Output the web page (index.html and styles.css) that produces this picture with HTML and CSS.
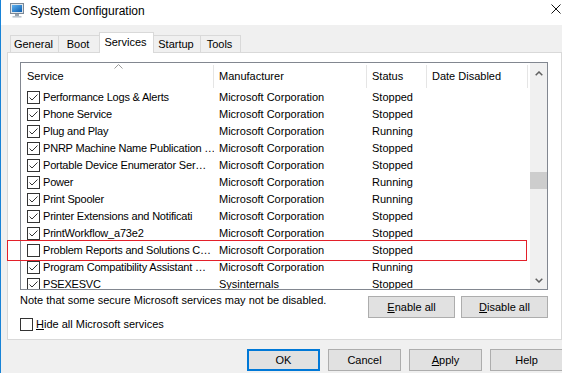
FILE: index.html
```html
<!DOCTYPE html>
<html lang="en">
<head>
<meta charset="utf-8">
<title>System Configuration</title>
<link rel="stylesheet" href="styles.css">
</head>
<body>
<div class="window">
  <div class="titlebar">
    <svg class="appicon" width="14" height="15" viewBox="0 0 14 15">
      <defs>
        <linearGradient id="scr" x1="0" y1="0" x2="1" y2="1">
          <stop offset="0" stop-color="#5fb2f0"/>
          <stop offset="1" stop-color="#0b5cae"/>
        </linearGradient>
      </defs>
      <rect x="0.5" y="0.5" width="13" height="10" fill="#dfe6ec" stroke="#7b8896"/>
      <rect x="2" y="2" width="10" height="7" fill="url(#scr)"/>
      <rect x="5" y="11" width="4" height="2" fill="#98a3ae"/>
      <rect x="2.5" y="13" width="9" height="1.6" fill="#b9c3cc"/>
    </svg>
    <span class="title">System Configuration</span>
    <svg class="close" width="10" height="10" viewBox="0 0 10 10">
      <path d="M0.5 0.5 L9.5 9.5 M9.5 0.5 L0.5 9.5" stroke="#111" stroke-width="1" fill="none"/>
    </svg>
  </div>
  <div class="client">
    <div class="tabs">
      <div class="tab t-general">General</div>
      <div class="tab t-boot">Boot</div>
      <div class="tab t-services active">Services</div>
      <div class="tab t-startup">Startup</div>
      <div class="tab t-tools">Tools</div>
    </div>
    <div class="panel">
      <div class="list">
        <div class="list-main">
          <div class="header cols">
            <div class="hcell c1">Service</div>
            <div class="hcell c2">Manufacturer</div>
            <div class="hcell c3">Status</div>
            <div class="hcell c4">Date Disabled</div>
            <svg class="sort" width="9" height="5" viewBox="0 0 9 5">
              <polyline points="0.5,4.5 4.5,0.5 8.5,4.5" fill="none" stroke="#9a9a9a" stroke-width="1"/>
            </svg>
          </div>
          <div class="rows">
            <div class="row cols"><div class="cell c1"><svg class="cb" viewBox="0 0 13 13"><rect x="0.5" y="0.5" width="12" height="12"/><polyline points="2.5,6.5 5,9 10.5,3.5"/></svg><span class="name">Performance Logs &amp; Alerts</span></div><div class="cell c2">Microsoft Corporation</div><div class="cell c3">Stopped</div><div class="cell c4"></div></div>
            <div class="row cols"><div class="cell c1"><svg class="cb" viewBox="0 0 13 13"><rect x="0.5" y="0.5" width="12" height="12"/><polyline points="2.5,6.5 5,9 10.5,3.5"/></svg><span class="name">Phone Service</span></div><div class="cell c2">Microsoft Corporation</div><div class="cell c3">Stopped</div><div class="cell c4"></div></div>
            <div class="row cols"><div class="cell c1"><svg class="cb" viewBox="0 0 13 13"><rect x="0.5" y="0.5" width="12" height="12"/><polyline points="2.5,6.5 5,9 10.5,3.5"/></svg><span class="name">Plug and Play</span></div><div class="cell c2">Microsoft Corporation</div><div class="cell c3">Running</div><div class="cell c4"></div></div>
            <div class="row cols"><div class="cell c1"><svg class="cb" viewBox="0 0 13 13"><rect x="0.5" y="0.5" width="12" height="12"/><polyline points="2.5,6.5 5,9 10.5,3.5"/></svg><span class="name">PNRP Machine Name Publication …</span></div><div class="cell c2">Microsoft Corporation</div><div class="cell c3">Stopped</div><div class="cell c4"></div></div>
            <div class="row cols"><div class="cell c1"><svg class="cb" viewBox="0 0 13 13"><rect x="0.5" y="0.5" width="12" height="12"/><polyline points="2.5,6.5 5,9 10.5,3.5"/></svg><span class="name">Portable Device Enumerator Ser…</span></div><div class="cell c2">Microsoft Corporation</div><div class="cell c3">Stopped</div><div class="cell c4"></div></div>
            <div class="row cols"><div class="cell c1"><svg class="cb" viewBox="0 0 13 13"><rect x="0.5" y="0.5" width="12" height="12"/><polyline points="2.5,6.5 5,9 10.5,3.5"/></svg><span class="name">Power</span></div><div class="cell c2">Microsoft Corporation</div><div class="cell c3">Running</div><div class="cell c4"></div></div>
            <div class="row cols"><div class="cell c1"><svg class="cb" viewBox="0 0 13 13"><rect x="0.5" y="0.5" width="12" height="12"/><polyline points="2.5,6.5 5,9 10.5,3.5"/></svg><span class="name">Print Spooler</span></div><div class="cell c2">Microsoft Corporation</div><div class="cell c3">Running</div><div class="cell c4"></div></div>
            <div class="row cols"><div class="cell c1"><svg class="cb" viewBox="0 0 13 13"><rect x="0.5" y="0.5" width="12" height="12"/><polyline points="2.5,6.5 5,9 10.5,3.5"/></svg><span class="name">Printer Extensions and Notificati</span></div><div class="cell c2">Microsoft Corporation</div><div class="cell c3">Stopped</div><div class="cell c4"></div></div>
            <div class="row cols"><div class="cell c1"><svg class="cb" viewBox="0 0 13 13"><rect x="0.5" y="0.5" width="12" height="12"/><polyline points="2.5,6.5 5,9 10.5,3.5"/></svg><span class="name">PrintWorkflow_a73e2</span></div><div class="cell c2">Microsoft Corporation</div><div class="cell c3">Stopped</div><div class="cell c4"></div></div>
            <div class="row cols"><div class="cell c1"><svg class="cb" viewBox="0 0 13 13"><rect x="0.5" y="0.5" width="12" height="12"/></svg><span class="name">Problem Reports and Solutions C…</span></div><div class="cell c2">Microsoft Corporation</div><div class="cell c3">Stopped</div><div class="cell c4"></div></div>
            <div class="row cols"><div class="cell c1"><svg class="cb" viewBox="0 0 13 13"><rect x="0.5" y="0.5" width="12" height="12"/><polyline points="2.5,6.5 5,9 10.5,3.5"/></svg><span class="name">Program Compatibility Assistant …</span></div><div class="cell c2">Microsoft Corporation</div><div class="cell c3">Running</div><div class="cell c4"></div></div>
            <div class="row cols"><div class="cell c1"><svg class="cb" viewBox="0 0 13 13"><rect x="0.5" y="0.5" width="12" height="12"/><polyline points="2.5,6.5 5,9 10.5,3.5"/></svg><span class="name">PSEXESVC</span></div><div class="cell c2">Sysinternals</div><div class="cell c3">Stopped</div><div class="cell c4"></div></div>
          </div>
        </div>
        <div class="vscroll">
          <div class="sb-btn up">
            <svg width="8" height="5" viewBox="0 0 8 5"><polyline points="0.7,4.3 4,1 7.3,4.3" fill="none" stroke="#606060" stroke-width="1.5"/></svg>
          </div>
          <div class="sb-track"><div class="sb-thumb"></div></div>
          <div class="sb-btn down">
            <svg width="8" height="5" viewBox="0 0 8 5"><polyline points="0.7,0.7 4,4 7.3,0.7" fill="none" stroke="#606060" stroke-width="1.5"/></svg>
          </div>
        </div>
      </div>
      <div class="actions">
        <span class="note">Note that some secure Microsoft services may not be disabled.</span>
        <div class="action-btns">
          <button class="btn wide"><u>E</u>nable all</button>
          <button class="btn wide"><u>D</u>isable all</button>
        </div>
      </div>
      <div class="hide">
        <svg class="cb" viewBox="0 0 13 13"><rect x="0.5" y="0.5" width="12" height="12"/></svg>
        <span class="hide-label"><u>H</u>ide all Microsoft services</span>
      </div>
      <div class="highlight"></div>
    </div>
    <div class="footer">
      <button class="btn default">OK</button>
      <button class="btn">Cancel</button>
      <button class="btn"><u>A</u>pply</button>
      <button class="btn">Help</button>
    </div>
  </div>
</div>
</body>
</html>
```
FILE: styles.css
```css
* { box-sizing: border-box; }

html, body {
  margin: 0;
  padding: 0;
}

body {
  width: 587px;
  height: 373px;
  overflow: hidden;
  background: #ffffff;
  font-family: "Liberation Sans", Arial, sans-serif;
  font-size: 11px;
  color: #000000;
}

.window {
  width: 562px;
  height: 373px;
  border-left: 1px solid #1883d7;
  overflow: hidden;
}

/* ---------- title bar ---------- */
.titlebar {
  height: 25px;
  display: flex;
  align-items: flex-start;
  padding-top: 3px;
  padding-left: 9px;
  background: #ffffff;
}

.appicon {
  display: block;
  flex: none;
}

.title {
  margin-left: 6px;
  font-size: 12px;
  line-height: 16px;
  color: #000000;
}

.close {
  display: block;
  margin-left: auto;
  margin-right: 1px;
  margin-top: 1px;
}

/* ---------- client ---------- */
.client {
  height: 348px;
  background: #f0f0f0;
  padding-top: 7px;
  padding-left: 6px;
}

.tabs {
  display: flex;
  align-items: flex-end;
  height: 21px;
  margin-left: 3px;
  margin-bottom: -1px;
  position: relative;
  z-index: 2;
}

.tab {
  height: 17px;
  margin-bottom: 1px;
  margin-right: -1px;
  border: 1px solid #d9d9d9;
  border-bottom: none;
  background: #f0f0f0;
  display: flex;
  align-items: center;
  justify-content: center;
  padding-right: 2px;
  white-space: nowrap;
}

.tab.active {
  height: 21px;
  margin-bottom: 0;
  background: #ffffff;
  padding-bottom: 2px;
  position: relative;
  z-index: 3;
}

.t-general { width: 49px; }
.t-boot { width: 42px; }
.t-services { width: 55px; }
.t-startup { width: 48px; }
.t-tools { width: 41px; }

.panel {
  position: relative;
  height: 288px;
  background: #ffffff;
  border: 1px solid #d9d9d9;
  padding-top: 9px;
  padding-left: 12px;
}

/* ---------- list view ---------- */
.list {
  width: 528px;
  height: 228px;
  border: 1px solid #828790;
  display: flex;
  overflow: hidden;
}

.list-main {
  flex: 1;
  overflow: hidden;
}

.cols {
  display: grid;
  grid-template-columns: 193px 153px 60px 101px;
}

.header {
  position: relative;
  height: 26px;
  padding-top: 2px;
  align-items: start;
}

.hcell {
  height: 23px;
  line-height: 23px;
  border-right: 1px solid #e5e5e5;
  padding-left: 5px;
  white-space: nowrap;
  overflow: hidden;
}

.hcell.c1 { padding-left: 6px; }

.sort {
  position: absolute;
  left: 93px;
  top: 1px;
  display: block;
}

.row {
  height: 17px;
  line-height: 17px;
}

.cell {
  padding-left: 5px;
  white-space: nowrap;
  overflow: hidden;
}

.cell.c1 {
  padding-left: 6px;
  display: flex;
  align-items: center;
  gap: 3px;
}

.name {
  white-space: nowrap;
  letter-spacing: -0.2px;
}

/* checkbox */
.cb {
  flex: none;
  display: block;
  width: 13px;
  height: 13px;
}

.cb rect {
  fill: #ffffff;
  stroke: #333333;
  stroke-width: 1;
}

.cb polyline {
  fill: none;
  stroke: #333333;
  stroke-width: 1;
}

/* scrollbar */
.vscroll {
  flex: none;
  width: 17px;
  background: #f0f0f0;
  display: flex;
  flex-direction: column;
}

.sb-btn {
  flex: none;
  height: 17px;
  display: flex;
  align-items: center;
  justify-content: center;
}

.sb-btn svg { display: block; }

.sb-btn.up { padding-top: 3px; }

.sb-track {
  flex: 1;
}

.sb-thumb {
  margin-top: 92px;
  height: 17px;
  background: #cdcdcd;
}

/* ---------- below list ---------- */
.actions {
  width: 528px;
  margin-top: 6px;
  display: flex;
  align-items: flex-start;
}

.note {
  margin-top: -3px;
  line-height: 14px;
  white-space: nowrap;
}

.action-btns {
  margin-left: auto;
  display: flex;
  gap: 6px;
}

.btn {
  font-family: inherit;
  font-size: 11px;
  color: #000000;
  width: 73px;
  height: 22px;
  padding: 0;
  margin: 0;
  background: #e1e1e1;
  border: 1px solid #adadad;
  border-radius: 0;
  line-height: 18px;
}

.btn.wide { width: 87px; }

.btn.default {
  border: 2px solid #0078d7;
}

.hide {
  height: 13px;
  display: flex;
  align-items: center;
  gap: 3px;
}

.hide-label {
  line-height: 13px;
  white-space: nowrap;
}

.highlight {
  position: absolute;
  left: -1px;
  top: 187px;
  width: 520px;
  height: 21px;
  border: 1px solid #e3202a;
  pointer-events: none;
}

/* ---------- footer ---------- */
.footer {
  margin-top: 9px;
  margin-right: -1px;
  display: flex;
  justify-content: flex-end;
  gap: 8px;
}
```
